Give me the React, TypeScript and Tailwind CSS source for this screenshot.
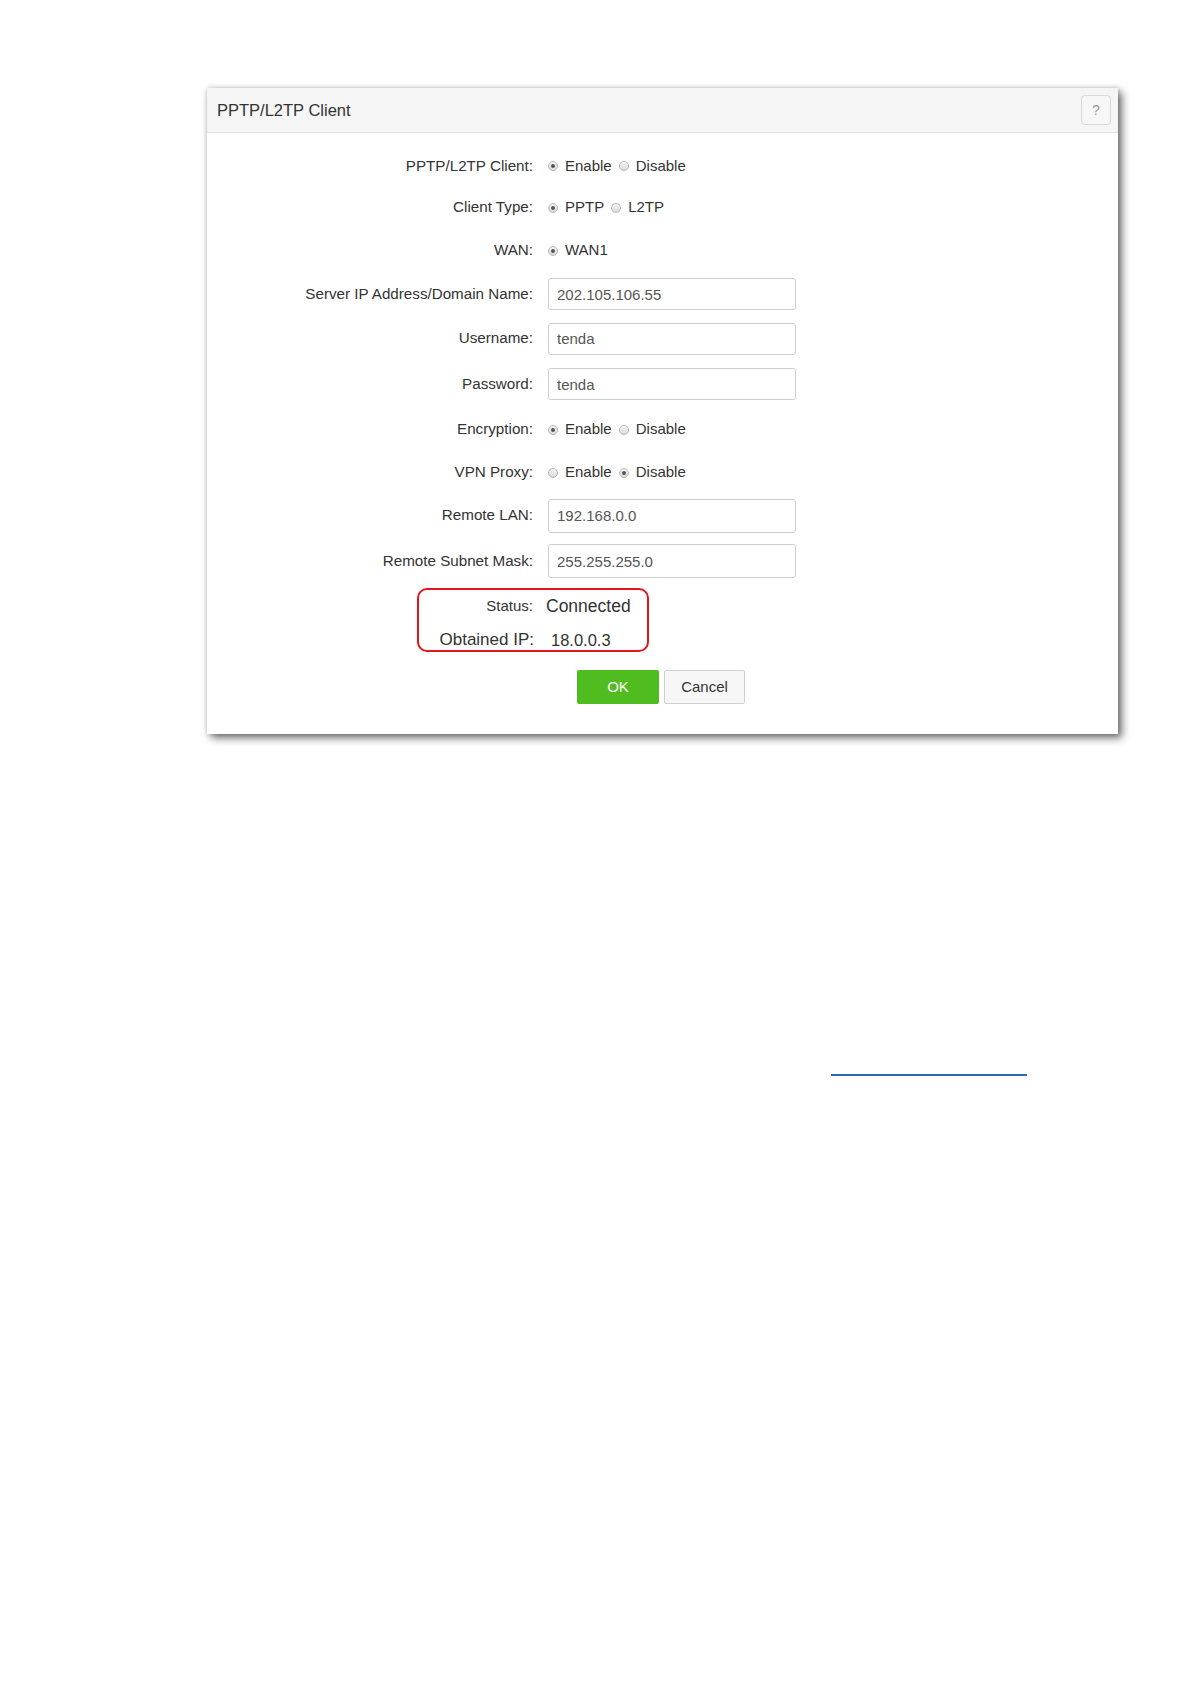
import type { ReactNode } from 'react';

const font = "font-['Liberation_Sans',Arial,sans-serif]";

function Radio({ checked }: { checked?: boolean }) {
  return (
    <span className="flex h-[10px] w-[10px] shrink-0 items-center justify-center rounded-full border border-[#b5b5b5] bg-gradient-to-b from-[#f4f4f4] to-[#dcdcdc]">
      {checked && <span className="h-[4px] w-[4px] rounded-full bg-[#555]" />}
    </span>
  );
}

function RadioGroup({ options, value }: { options: string[]; value: string }) {
  return (
    <div className="flex items-center gap-[7px]">
      {options.map((opt) => (
        <label key={opt} className="flex items-center gap-[7px] text-[15px] text-[#333]">
          <Radio checked={opt === value} />
          <span>{opt}</span>
        </label>
      ))}
    </div>
  );
}

function TextBox({ value, tall }: { value: string; tall?: boolean }) {
  return (
    <input
      readOnly
      value={value}
      className={`w-[248px] ${tall ? 'h-[34px]' : 'h-[32px]'} rounded-[3px] border border-[#cfcfcf] bg-white px-[8px] text-[15px] text-[#555] outline-none ${font}`}
    />
  );
}

function Row({ label, h, children }: { label: string; h: string; children: ReactNode }) {
  return (
    <div className={`flex items-center ${h}`}>
      <div className="w-[326px] shrink-0 text-right text-[15.2px] text-[#333]">{label}</div>
      <div className="pl-[15px]">{children}</div>
    </div>
  );
}

export default function App() {
  return (
    <div className={`min-h-screen bg-white ${font}`}>
      <div className="h-[88px]" />
      <div className="ml-[207px] w-[911px] bg-white shadow-[4px_4px_8px_rgba(0,0,0,0.55),0_0_5px_rgba(0,0,0,0.18)]">
        <header className="flex h-[45px] items-center justify-between border-b border-[#e3e3e3] bg-[#f5f5f5] pl-[10px] pr-[7px]">
          <h1 className="text-[16.5px] text-[#333]">PPTP/L2TP Client</h1>
          <button className="flex h-[30px] w-[30px] items-center justify-center rounded-[4px] border border-[#d9d9d9] bg-[#f7f7f7] text-[14px] text-[#999]">
            ?
          </button>
        </header>

        <div className="flex flex-col pt-[13px] pb-[30px]">
          <Row label="PPTP/L2TP Client:" h="h-[40px]">
            <RadioGroup options={['Enable', 'Disable']} value="Enable" />
          </Row>
          <Row label="Client Type:" h="h-[43px]">
            <RadioGroup options={['PPTP', 'L2TP']} value="PPTP" />
          </Row>
          <Row label="WAN:" h="h-[43px]">
            <RadioGroup options={['WAN1']} value="WAN1" />
          </Row>
          <Row label="Server IP Address/Domain Name:" h="h-[44px]">
            <TextBox value="202.105.106.55" />
          </Row>
          <Row label="Username:" h="h-[45px]">
            <TextBox value="tenda" />
          </Row>
          <Row label="Password:" h="h-[46px]">
            <TextBox value="tenda" />
          </Row>
          <Row label="Encryption:" h="h-[45px]">
            <RadioGroup options={['Enable', 'Disable']} value="Enable" />
          </Row>
          <Row label="VPN Proxy:" h="h-[41px]">
            <RadioGroup options={['Enable', 'Disable']} value="Disable" />
          </Row>
          <Row label="Remote LAN:" h="h-[45px]">
            <TextBox value="192.168.0.0" tall />
          </Row>
          <Row label="Remote Subnet Mask:" h="h-[46px]">
            <TextBox value="255.255.255.0" tall />
          </Row>

          <div className="ml-[210px] mt-[4px] h-[64px] w-[232px] rounded-[10px] border-2 border-[#e3141b]">
            <div className="flex h-[32px] items-center">
              <span className="w-[114px] shrink-0 text-right text-[15px] text-[#333]">Status:</span>
              <span className="pl-[13px] text-[17.5px] text-[#333]">Connected</span>
            </div>
            <div className="flex h-[28px] items-end">
              <span className="w-[115px] shrink-0 text-right text-[17px] leading-[20px] text-[#333]">Obtained IP:</span>
              <span className="pl-[17px] text-[16.5px] leading-[20px] text-[#333]">18.0.0.3</span>
            </div>
          </div>

          <div className="ml-[370px] mt-[18px] flex gap-[5px]">
            <button className="h-[34px] w-[82px] rounded-[2px] bg-[#4fbd1f] text-[15px] text-white">OK</button>
            <button className="h-[34px] w-[81px] rounded-[2px] border border-[#cfcfcf] bg-[#f7f7f7] text-[15px] text-[#333]">
              Cancel
            </button>
          </div>
        </div>
      </div>

      <div className="ml-[831px] mt-[340px] h-[1.5px] w-[196px] bg-[#2b6cb0]" />
    </div>
  );
}
